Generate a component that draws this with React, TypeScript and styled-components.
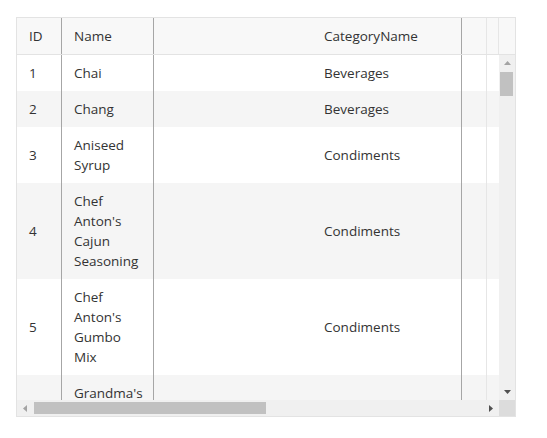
import React from "react";
import styled, { createGlobalStyle } from "styled-components";

const GlobalStyle = createGlobalStyle`
  html, body { margin: 0; padding: 0; background: #ffffff; }
  * { box-sizing: border-box; }
`;

type Divider = "dark" | "light" | "none";

interface Column {
  key: string;
  title: string;
  width: number;
  divider: Divider;
}

const columns: Column[] = [
  { key: "id", title: "ID", width: 45, divider: "dark" },
  { key: "name", title: "Name", width: 92, divider: "dark" },
  { key: "blank", title: "", width: 158, divider: "none" },
  { key: "category", title: "CategoryName", width: 150, divider: "dark" },
  { key: "narrow", title: "", width: 23, divider: "light" },
  { key: "qty", title: "QuantityPerUnit", width: 160, divider: "light" },
];

interface Product {
  id: number;
  name: string;
  blank: string;
  category: string;
  narrow: string;
  qty: string;
}

const products: Product[] = [
  { id: 1, name: "Chai", blank: "", category: "Beverages", narrow: "", qty: "10 boxes x 20 bags" },
  { id: 2, name: "Chang", blank: "", category: "Beverages", narrow: "", qty: "24 - 12 oz bottles" },
  { id: 3, name: "Aniseed Syrup", blank: "", category: "Condiments", narrow: "", qty: "12 - 550 ml bottles" },
  { id: 4, name: "Chef Anton's Cajun Seasoning", blank: "", category: "Condiments", narrow: "", qty: "48 - 6 oz jars" },
  { id: 5, name: "Chef Anton's Gumbo Mix", blank: "", category: "Condiments", narrow: "", qty: "36 boxes" },
  { id: 6, name: "Grandma's Boysenberry Spread", blank: "", category: "Condiments", narrow: "", qty: "12 - 8 oz jars" },
];

const dividerColor = (d: Divider) =>
  d === "dark" ? "#a6a6a6" : d === "light" ? "#e6e6e6" : "transparent";

const Page = styled.div`
  padding: 17px 0 0 16px;
  font-family: "Open Sans", "Noto Sans", "Liberation Sans", sans-serif;
  font-size: 13.5px;
  color: #333333;
`;

const GridBox = styled.div`
  width: 500px;
  height: 400px;
  border: 1px solid #e3e3e3;
  display: flex;
  flex-direction: column;
  background: #ffffff;
`;

const HeaderBar = styled.div`
  display: flex;
  height: 37px;
  flex: none;
  background: #f8f8f8;
  border-bottom: 1px solid #e3e3e3;
`;

const HeaderCells = styled.div`
  display: flex;
  width: 481px;
  overflow: hidden;
  flex: none;
`;

const HeaderFiller = styled.div`
  flex: 1;
  border-left: 1px solid #e6e6e6;
`;

const Cell = styled.div<{ $w: number; $divider: Divider }>`
  flex: none;
  width: ${(p) => p.$w}px;
  padding: 8px 12px;
  line-height: 20px;
  display: flex;
  align-items: center;
  border-right: 1px solid ${(p) => dividerColor(p.$divider)};
  white-space: normal;
  overflow: hidden;
`;

const HeaderCell = styled(Cell)`
  white-space: nowrap;
`;

const Middle = styled.div`
  flex: 1;
  display: flex;
  min-height: 0;
`;

const Viewport = styled.div`
  flex: 1;
  overflow: hidden;
`;

const Row = styled.div<{ $alt: boolean }>`
  display: flex;
  background: ${(p) => (p.$alt ? "#f5f5f5" : "#ffffff")};
`;

const VScroll = styled.div`
  width: 16px;
  flex: none;
  background: #f0f0f0;
  display: flex;
  flex-direction: column;
`;

const HScroll = styled.div`
  flex: 1;
  background: #f0f0f0;
  display: flex;
  align-items: stretch;
`;

const Bottom = styled.div`
  height: 16px;
  flex: none;
  display: flex;
`;

const Corner = styled.div`
  width: 16px;
  flex: none;
  background: #dcdcdc;
`;

const ArrowButton = styled.div`
  width: 16px;
  height: 16px;
  flex: none;
  display: flex;
  align-items: center;
  justify-content: center;
`;

const Spacer = styled.div`
  flex: 1;
`;

const VThumb = styled.div`
  height: 24px;
  margin: 1px 2px 0 1px;
  background: #c1c1c1;
`;

const HThumb = styled.div`
  width: 232px;
  margin: 2px 0 2px 1px;
  background: #c1c1c1;
`;

const Arrow: React.FC<{ dir: "up" | "down" | "left" | "right"; enabled: boolean }> = ({ dir, enabled }) => {
  const color = enabled ? "#505050" : "#a3a3a3";
  const pts =
    dir === "up"
      ? "0,4 3.5,0 7,4"
      : dir === "down"
      ? "0,0 7,0 3.5,4"
      : dir === "left"
      ? "4,0 4,7 0,3.5"
      : "0,0 4,3.5 0,7";
  const w = dir === "up" || dir === "down" ? 7 : 4;
  const h = dir === "up" || dir === "down" ? 4 : 7;
  return (
    <svg width={w} height={h} viewBox={`0 0 ${w} ${h}`}>
      <polygon points={pts} fill={color} />
    </svg>
  );
};

const cellValue = (p: Product, key: string): string => {
  switch (key) {
    case "id":
      return String(p.id);
    case "name":
      return p.name;
    case "blank":
      return p.blank;
    case "category":
      return p.category;
    case "narrow":
      return p.narrow;
    default:
      return p.qty;
  }
};

export default function App() {
  return (
    <>
      <GlobalStyle />
      <Page>
        <GridBox>
          <HeaderBar>
            <HeaderCells>
              {columns.map((c) => (
                <HeaderCell key={c.key} $w={c.width} $divider={c.divider}>
                  {c.title}
                </HeaderCell>
              ))}
            </HeaderCells>
            <HeaderFiller />
          </HeaderBar>
          <Middle>
            <Viewport>
              {products.map((p, i) => (
                <Row key={p.id} $alt={i % 2 === 1}>
                  {columns.map((c) => (
                    <Cell key={c.key} $w={c.width} $divider={c.divider}>
                      {cellValue(p, c.key)}
                    </Cell>
                  ))}
                </Row>
              ))}
            </Viewport>
            <VScroll>
              <ArrowButton>
                <Arrow dir="up" enabled={false} />
              </ArrowButton>
              <VThumb />
              <Spacer />
              <ArrowButton>
                <Arrow dir="down" enabled />
              </ArrowButton>
            </VScroll>
          </Middle>
          <Bottom>
            <HScroll>
              <ArrowButton>
                <Arrow dir="left" enabled={false} />
              </ArrowButton>
              <HThumb />
              <Spacer />
              <ArrowButton>
                <Arrow dir="right" enabled />
              </ArrowButton>
            </HScroll>
            <Corner />
          </Bottom>
        </GridBox>
      </Page>
    </>
  );
}
